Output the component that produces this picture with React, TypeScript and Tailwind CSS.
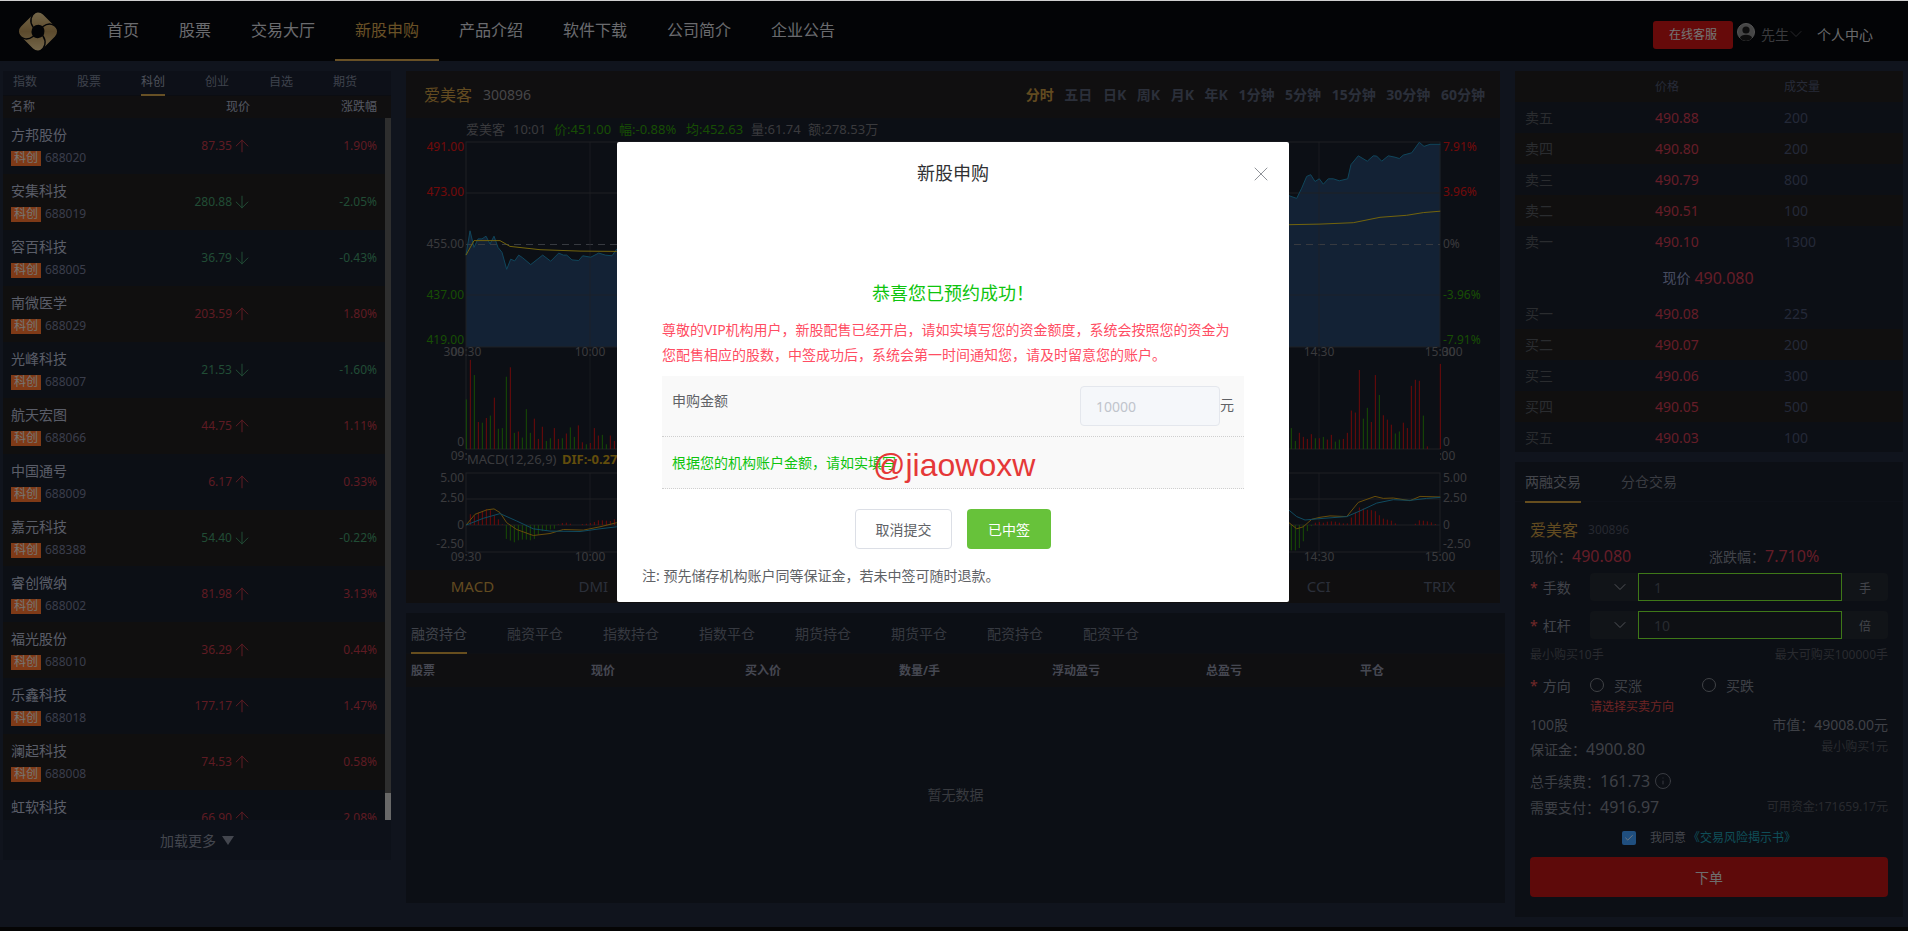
import { ArrowDown, ArrowUp, ChevronDown, Check, Info, X } from "lucide-react";

const stocks = [
  ["方邦股份", "688020", "87.35", "1.90%"],
  ["安集科技", "688019", "280.88", "-2.05%"],
  ["容百科技", "688005", "36.79", "-0.43%"],
  ["南微医学", "688029", "203.59", "1.80%"],
  ["光峰科技", "688007", "21.53", "-1.60%"],
  ["航天宏图", "688066", "44.75", "1.11%"],
  ["中国通号", "688009", "6.17", "0.33%"],
  ["嘉元科技", "688388", "54.40", "-0.22%"],
  ["睿创微纳", "688002", "81.98", "3.13%"],
  ["福光股份", "688010", "36.29", "0.44%"],
  ["乐鑫科技", "688018", "177.17", "1.47%"],
  ["澜起科技", "688008", "74.53", "0.58%"],
  ["虹软科技", "688088", "66.90", "2.08%"],
];

const navItems = ["首页", "股票", "交易大厅", "新股申购", "产品介绍", "软件下载", "公司简介", "企业公告"];
const periods = ["分时", "五日", "日K", "周K", "月K", "年K", "1分钟", "5分钟", "15分钟", "30分钟", "60分钟"];
const indicators = ["MACD", "DMI", "DMA", "BIAS", "KDJ", "BOLL", "RSI", "CCI", "TRIX"];
const holdTabs = ["融资持仓", "融资平仓", "指数持仓", "指数平仓", "期货持仓", "期货平仓", "配资持仓", "配资平仓"];

const sells = [
  ["卖五", "490.88", "200"],
  ["卖四", "490.80", "200"],
  ["卖三", "490.79", "800"],
  ["卖二", "490.51", "100"],
  ["卖一", "490.10", "1300"],
];
const buys = [
  ["买一", "490.08", "225"],
  ["买二", "490.07", "200"],
  ["买三", "490.06", "300"],
  ["买四", "490.05", "500"],
  ["买五", "490.03", "100"],
];

// chart points are read off the picture, in crop pixels of the left and right part
const lx = (p: number) => 400 + p / 3;
const rx = (p: number) => 1280 + p / 3;
const cy = (p: number) => 70 + p / 2.96;

const line = (left: number[][], right: number[][]) =>
  [...left.map(([x, y]) => [lx(x), cy(y)]), ...right.map(([x, y]) => [rx(x), cy(y)])]
    .map(([x, y]) => `${x.toFixed(1)},${y.toFixed(1)}`)
    .join(" ");

const pricePoints = line(
  [[198,548],[210,476],[222,525],[234,500],[246,500],[258,492],[270,515],[282,492],[294,525],[306,540],[320,590],[332,560],[344,565],[356,548],[368,556],[392,576],[428,548],[452,566],[476,542],[490,548],[500,548],[516,562],[536,564],[548,550],[572,554],[596,542],[616,548],[636,550],[650,530]],
  [[27,372],[50,380],[65,350],[80,315],[92,310],[105,330],[118,322],[130,338],[145,322],[160,322],[178,328],[203,322],[213,280],[235,254],[262,270],[280,254],[290,255],[305,270],[325,254],[345,258],[358,262],[370,252],[395,245],[418,214],[432,226],[450,220],[481,220]],
);
const avgPoints = line(
  [[198,548],[222,505],[300,505],[330,522],[420,532],[540,536],[650,537]],
  [[27,458],[120,456],[220,452],[300,436],[380,430],[430,422],[481,418]],
);
const difPoints = line(
  [[198,1347],[225,1315],[260,1302],[282,1299],[300,1310],[320,1340],[350,1360],[400,1378],[450,1372],[490,1360],[550,1362],[600,1352],[650,1340]],
  [[27,1340],[50,1358],[70,1352],[95,1330],[120,1324],[150,1320],[200,1322],[235,1280],[285,1262],[310,1268],[340,1267],[390,1275],[420,1262],[481,1264]],
);
const deaPoints = line(
  [[198,1347],[250,1327],[300,1313],[350,1335],[400,1358],[450,1365],[540,1366],[600,1358],[650,1352]],
  [[27,1303],[50,1322],[75,1332],[120,1328],[200,1322],[240,1305],[290,1282],[340,1272],[390,1274],[440,1268],[481,1265]],
);

type Bar = [number, "r" | "g", number];
const volLeft: Bar[] = [[199,"g",975],[211,"r",858],[223,"g",903],[235,"r",1042],[247,"g",1044],[259,"r",1030],[271,"g",1023],[283,"r",970],[295,"g",1062],[307,"g",1060],[319,"g",908],[331,"r",880],[343,"g",1074],[355,"r",1070],[367,"g",1088],[379,"g",1004],[391,"g",1074],[403,"r",1032],[415,"r",1092],[427,"r",1056],[439,"g",1098],[451,"g",1090],[463,"r",1060],[475,"r",1092],[487,"g",1090],[499,"r",1076],[511,"g",1058],[523,"g",1086],[535,"r",1052],[547,"r",1102],[559,"g",1108],[571,"r",1104],[583,"r",1060],[595,"r",1082],[607,"g",1080],[619,"g",1108],[631,"r",1082],[643,"r",1098]];
const volRight: Bar[] = [[34,"g",1060],[46,"g",1098],[58,"r",1074],[70,"r",1086],[82,"r",1092],[94,"r",1078],[106,"g",1090],[118,"r",1090],[130,"g",1086],[142,"r",1094],[154,"r",1080],[166,"g",1100],[178,"g",1094],[190,"r",1092],[202,"r",1074],[214,"r",1008],[226,"r",1014],[238,"r",888],[250,"g",1032],[262,"g",1000],[274,"r",1042],[286,"r",903],[298,"g",962],[310,"r",1022],[322,"r",1035],[334,"r",1050],[346,"g",1076],[358,"g",1070],[370,"r",1044],[382,"r",1060],[394,"r",935],[406,"r",917],[418,"r",920],[430,"g",1023],[442,"r",1114],[481,"r",870]];
const macdLeft: Bar[] = [[211,"r",1315],[223,"r",1318],[235,"r",1310],[247,"r",1305],[259,"r",1300],[271,"r",1303],[283,"r",1318],[295,"r",1330],[307,"r",1345],[319,"g",1388],[331,"g",1393],[343,"g",1398],[355,"g",1392],[367,"g",1390],[379,"g",1390],[391,"g",1392],[403,"g",1388],[415,"g",1375],[427,"g",1365],[439,"g",1362],[451,"g",1360],[463,"g",1358],[475,"r",1345],[487,"r",1341],[499,"r",1340],[511,"r",1343],[547,"r",1344],[559,"r",1343],[571,"r",1341],[583,"r",1338],[595,"r",1333],[607,"r",1333],[619,"r",1334],[631,"r",1335],[643,"r",1330]];
const macdRight: Bar[] = [[34,"g",1422],[46,"g",1422],[58,"g",1415],[70,"g",1395],[82,"g",1365],[94,"g",1350],[106,"r",1340],[118,"r",1338],[130,"r",1340],[142,"r",1337],[154,"r",1336],[166,"r",1337],[178,"r",1340],[190,"r",1342],[202,"r",1342],[214,"r",1325],[226,"r",1310],[238,"r",1295],[250,"r",1298],[262,"r",1302],[274,"r",1303],[286,"r",1306],[298,"r",1318],[310,"r",1328],[322,"r",1331],[334,"r",1334],[346,"r",1342],[406,"r",1343],[418,"r",1333],[430,"r",1334],[442,"r",1336],[454,"r",1339],[466,"r",1344]];

const RED = "#e01414";
const GREEN = "#2e9a08";
const GRID = "#3c4048";
const AXIS = "#74747a";

const Bars = ({ left, right, base }: { left: Bar[]; right: Bar[]; base: number }) => (
  <g strokeWidth={1}>
    {left.map(([x, c, y]) => (
      <line key={`l${x}`} x1={lx(x)} x2={lx(x)} y1={cy(base)} y2={cy(y)} stroke={c === "r" ? RED : GREEN} />
    ))}
    {right.map(([x, c, y]) => (
      <line key={`r${x}`} x1={rx(x)} x2={rx(x)} y1={cy(base)} y2={cy(y)} stroke={c === "r" ? RED : GREEN} />
    ))}
  </g>
);

const KLineChart = () => (
  <svg viewBox="406 118 1094 452" className="block w-[1094px] h-[452px]" fontSize={12}>
    <text y={134} fontSize={13} fill={AXIS}>
      <tspan x={466}>爱美客</tspan>
      <tspan x={513}>10:01</tspan>
      <tspan x={554} fill={GREEN}>价:451.00</tspan>
      <tspan x={619} fill={GREEN}>幅:-0.88%</tspan>
      <tspan x={686} fill={GREEN}>均:452.63</tspan>
      <tspan x={751}>量:61.74</tspan>
      <tspan x={808}>额:278.53万</tspan>
    </text>

    {/* price area */}
    <polygon points={`466,347 ${pricePoints} 1440,347`} fill="#27456a" />
    <rect x={466} y={142} width={974} height={205} fill="none" stroke={GRID} />
    <line x1={466} x2={1440} y1={193} y2={193} stroke={GRID} />
    <line x1={466} x2={1440} y1={295} y2={295} stroke={GRID} opacity={0.7} />
    <line x1={466} x2={1440} y1={244.5} y2={244.5} stroke="#6e7480" strokeDasharray="7 5" />
    <line x1={590} x2={590} y1={142} y2={347} stroke={GRID} opacity={0.7} />
    <line x1={1319} x2={1319} y1={142} y2={347} stroke={GRID} opacity={0.7} />
    <polyline points={pricePoints} fill="none" stroke="#1f8cb8" strokeWidth={1} />
    <polyline points={avgPoints} fill="none" stroke="#e6c818" strokeWidth={1} />

    <g textAnchor="end">
      <text x={464} y={151} fill={RED}>491.00</text>
      <text x={464} y={196} fill={RED}>473.00</text>
      <text x={464} y={248} fill={AXIS}>455.00</text>
      <text x={464} y={299} fill={GREEN}>437.00</text>
      <text x={464} y={344} fill={GREEN}>419.00</text>
    </g>
    <text x={1443} y={151} fill={RED}>7.91%</text>
    <text x={1443} y={196} fill={RED}>3.96%</text>
    <text x={1443} y={248} fill={AXIS}>0%</text>
    <text x={1443} y={299} fill={GREEN}>-3.96%</text>
    <text x={1443} y={344} fill={GREEN}>-7.91%</text>

    {/* volume */}
    <g fill={AXIS}>
      <text x={464} y={356} textAnchor="end">300</text>
      <text x={466} y={356} textAnchor="middle">09:30</text>
      <text x={590} y={356} textAnchor="middle">10:00</text>
      <text x={1319} y={356} textAnchor="middle">14:30</text>
      <text x={1440} y={356} textAnchor="middle">15:00</text>
      <text x={1442} y={356}>300</text>
      <text x={464} y={446} textAnchor="end">0</text>
      <text x={1443} y={446}>0</text>
      <text x={466} y={460} textAnchor="middle">09:30</text>
      <text x={1440} y={460} textAnchor="middle">15:00</text>
    </g>
    <line x1={590} x2={590} y1={347} y2={449} stroke={GRID} opacity={0.6} />
    <line x1={1319} x2={1319} y1={347} y2={449} stroke={GRID} opacity={0.6} />
    <line x1={466} x2={466} y1={347} y2={449} stroke={GRID} />
    <line x1={466} x2={1440} y1={449} y2={449} stroke={GRID} />
    <Bars left={volLeft} right={volRight} base={1122} />

    {/* macd */}
    <rect x={467} y={450} width={973} height={22} fill="#181e2a" />
    <text x={467} y={464} fontSize={13} fill={AXIS}>MACD(12,26,9)</text>
    <text x={562} y={464} fontSize={13} fontWeight={700} fill="#c49a18">DIF:-0.27</text>
    <rect x={466} y={473} width={974} height={79} fill="none" stroke={GRID} />
    <line x1={466} x2={1440} y1={499} y2={499} stroke={GRID} />
    <line x1={466} x2={1440} y1={525} y2={525} stroke={GRID} />
    <line x1={590} x2={590} y1={473} y2={552} stroke={GRID} opacity={0.7} />
    <line x1={1319} x2={1319} y1={473} y2={552} stroke={GRID} opacity={0.7} />
    <Bars left={macdLeft} right={macdRight} base={1347} />
    <polyline points={difPoints} fill="none" stroke="#d09a14" strokeWidth={1} />
    <polyline points={deaPoints} fill="none" stroke="#1f96c0" strokeWidth={1} />
    <g fill={AXIS}>
      <text x={464} y={482} textAnchor="end">5.00</text>
      <text x={464} y={502} textAnchor="end">2.50</text>
      <text x={464} y={529} textAnchor="end">0</text>
      <text x={464} y={548} textAnchor="end">-2.50</text>
      <text x={1443} y={482}>5.00</text>
      <text x={1443} y={502}>2.50</text>
      <text x={1443} y={529}>0</text>
      <text x={1443} y={548}>-2.50</text>
      <text x={466} y={561} textAnchor="middle">09:30</text>
      <text x={590} y={561} textAnchor="middle">10:00</text>
      <text x={1319} y={561} textAnchor="middle">14:30</text>
      <text x={1440} y={561} textAnchor="middle">15:00</text>
    </g>
  </svg>
);

const Logo = () => (
  <svg viewBox="0 0 44 45" className="w-[44px] h-[45px]">
    <defs>
      <linearGradient id="gold" x1="0" y1="0" x2="1" y2="1">
        <stop offset="0" stopColor="#eed49a" />
        <stop offset="0.5" stopColor="#b8955a" />
        <stop offset="1" stopColor="#f0d79e" />
      </linearGradient>
    </defs>
    <rect x="6.5" y="7" width="31" height="31" rx="7" transform="rotate(45 22 22.5)" fill="url(#gold)" />
    <g fill="none" stroke="#06080c" strokeWidth="1.4" strokeLinecap="round">
      <path d="M17 18 C13 12 15 6 20 3" />
      <path d="M27 17.5 C33 13 39 15 42 21" />
      <path d="M27 27 C31 33 29 39 24 42" />
      <path d="M17 27.5 C11 32 5 30 2 24" />
    </g>
    <path d="M17 18 Q22 14 27 17.5 Q30 22.5 27 27 Q22 31 17 27.5 Q14 22.5 17 18 Z" fill="#06080c" />
  </svg>
);

const SelectInput = ({ value, unit }: { value: string; unit: string }) => (
  <div className="flex-1 h-[28px] flex rounded bg-[#222831]">
    <div className="w-[48px] flex items-center justify-end pr-[8px]">
      <ChevronDown size={20} strokeWidth={1.2} className="text-[#a0a4ac]" />
    </div>
    <input
      readOnly
      value={value}
      className="w-[204px] h-full border border-[#7cf030] bg-[#1c2029] px-[15px] text-[14px] text-[#50555f] outline-none"
    />
    <div className="flex-1 flex items-center justify-center pt-1 text-[12px] text-[#868b96]">{unit}</div>
  </div>
);

const Required = ({ text }: { text: string }) => (
  <div className="w-[60px] shrink-0 text-[14px] text-[#828794] whitespace-nowrap">
    <span className="text-[#e05252] mr-[5px]">*</span>
    {text}
  </div>
);

const BookRow = ({ row, odd }: { row: string[]; odd: boolean }) => (
  <div className={`grid grid-cols-[130px_129px_1fr] pl-[10px] h-[31px] items-center text-[14px] ${odd ? "bg-[#201e1e]" : "bg-[#181e2a]"}`}>
    <span className="text-[#54585f]">{row[0]}</span>
    <span className="text-[#c83a50]">{row[1]}</span>
    <span className="text-[#485270]">{row[2]}</span>
  </div>
);

export default function App() {
  return (
    <div className="h-screen w-full overflow-hidden flex flex-col bg-[#20283a] font-['Noto_Sans','Noto_Sans_CJK_SC',sans-serif]">
      <div className="h-px bg-[#cfcfcf]" />

      <header className="h-[60px] flex items-stretch bg-[#06080c]">
        <div className="w-[87px] pl-[16px] pt-[8px]">
          <Logo />
        </div>
        <nav className="flex">
          {navItems.map((item) => (
            <div
              key={item}
              className={`px-5 flex items-center text-[16px] border-b-2 ${item === "新股申购" ? "text-[#d2a24c] border-[#d2a24c]" : "text-[#d4d6dc] border-transparent"}`}
            >
              {item}
            </div>
          ))}
        </nav>
        <div className="ml-auto flex items-center pt-[6px] pr-[35px]">
          <div className="w-[80px] h-[28px] mt-[2px] mr-[4px] flex items-center justify-center rounded-[3px] bg-[#cc1414] text-[12px] text-[#e8e8e8]">
            在线客服
          </div>
          <svg viewBox="0 0 18 18" className="w-[18px] h-[18px] mb-[4px]">
            <circle cx="9" cy="9" r="8.5" fill="#8c8c8c" stroke="#aaa" strokeWidth="1" />
            <circle cx="9" cy="7" r="3.6" fill="#1a1a1a" />
            <path d="M2.8 15 C4 10.8 14 10.8 15.2 15 A8 8 0 0 1 2.8 15 Z" fill="#1a1a1a" />
          </svg>
          <span className="ml-[6px] text-[14px] text-[#74747a]">先生</span>
          <ChevronDown size={20} strokeWidth={0.8} className="-ml-[3px] text-[#74747a]" />
          <span className="ml-[11px] text-[14px] text-[#d0d2d6]">个人中心</span>
        </div>
      </header>

      <main className="flex-1 min-h-0 flex pt-[10px] pl-[3px]">
        {/* left: stock list */}
        <section className="w-[388px] h-[789px] flex flex-col bg-[#181e2a] shrink-0">
          <div className="h-[25px] flex pl-[10px] gap-[40px] bg-[#1a2030] border-b border-[#161a24]">
            {["指数", "股票", "科创", "创业", "自选", "期货"].map((tab) => (
              <div
                key={tab}
                className={`h-[25px] w-[24px] text-[12px] leading-[22px] border-b-2 ${tab === "科创" ? "text-[#9aa0b4] border-[#cfa04a]" : "text-[#7c8498] border-transparent"}`}
              >
                {tab}
              </div>
            ))}
          </div>
          <div className="h-[22px] flex items-center pl-[8px] pr-[14px] bg-[#201e20] text-[12px] text-[#a8aec4]">
            <span className="w-[137px]">名称</span>
            <span className="w-[102px] text-right">现价</span>
            <span className="flex-1 text-right">涨跌幅</span>
          </div>
          <div className="relative h-[702px] overflow-hidden">
            {stocks.map(([name, code, price, pct], i) => {
              const down = pct.startsWith("-");
              const color = down ? "text-[#42986a]" : "text-[#bc3646]";
              return (
                <div
                  key={code}
                  className={`h-[56px] w-[382px] pl-[8px] pr-[8px] flex items-center ${i % 2 ? "bg-[#201e1e]" : "bg-[#181e2a]"}`}
                >
                  <div className="w-[137px]">
                    <div className="text-[14px] leading-[20px] text-[#b4bbd0]">{name}</div>
                    <div className="mt-[4px] flex items-center">
                      <span className="w-[30px] h-[15px] shrink-0 flex items-center justify-center bg-[#ff742e] text-[12px] text-[#f0e8e0]">科创</span>
                      <span className="ml-[4px] text-[12px] text-[#747a96]">{code}</span>
                    </div>
                  </div>
                  <div className={`w-[100px] flex items-center justify-end text-[12px] ${color}`}>
                    {price}
                    <span className="-mr-[4px]">
                      {down ? <ArrowDown size={20} strokeWidth={1.2} /> : <ArrowUp size={20} strokeWidth={1.2} />}
                    </span>
                  </div>
                  <div className={`flex-1 text-right text-[12px] ${color}`}>{pct}</div>
                </div>
              );
            })}
            <div className="absolute right-0 top-0 h-full w-[6px] bg-[#5c5c5c]">
              <div className="absolute bottom-0 w-full h-[27px] bg-[#d0d0d0]" />
            </div>
          </div>
          <div className="h-[40px] flex items-center justify-center bg-[#1a2232] text-[14px] text-[#868c9c]">
            加载更多
            <span className="ml-[6px] w-0 h-0 border-x-[6px] border-t-[9px] border-x-transparent border-t-[#868c9c]" />
          </div>
        </section>

        {/* center: chart and positions */}
        <section className="w-[1099px] ml-[15px] shrink-0 flex flex-col">
          <div className="w-[1094px] h-[532px] flex flex-col bg-[#181e2a]">
            <div className="h-[47px] flex items-center pl-[18px] pr-[15px] bg-[#201e20]">
              <span className="text-[16px] text-[#c49640]">爱美客</span>
              <span className="ml-[11px] text-[14px] text-[#8c8c90]">300896</span>
              <div className="ml-auto flex gap-[10.6px] text-[14px] font-bold text-[#565e74]">
                {periods.map((p) => (
                  <span key={p} className={p === "分时" ? "text-[#c49640]" : ""}>
                    {p}
                  </span>
                ))}
              </div>
            </div>
            <KLineChart />
            <div className="flex-1 grid grid-cols-9 pl-[6px] items-center bg-[#201e20] text-[15px] text-[#565e74]">
              {indicators.map((name) => (
                <span key={name} className={`text-center ${name === "MACD" ? "text-[#c49640]" : ""}`}>
                  {name}
                </span>
              ))}
            </div>
          </div>

          <div className="mt-[10px] h-[290px] flex flex-col bg-[#181e2a]">
            <div className="h-[41px] flex pl-[5px] gap-[40px] border-b border-[#1c2028]">
              {holdTabs.map((tab) => (
                <div
                  key={tab}
                  className={`w-[56px] h-[41px] whitespace-nowrap text-[14px] leading-[41px] border-b-2 ${tab === "融资持仓" ? "text-[#808694] border-[#cf9c3c]" : "text-[#6c7280] border-transparent"}`}
                >
                  {tab}
                </div>
              ))}
            </div>
            <div className="h-[33px] grid grid-cols-[180px_154px_154px_153px_154px_154px_1fr] pl-[5px] items-center bg-[#1e1e22] text-[12px] font-bold text-[#8c90a4]">
              <span>股票</span>
              <span>现价</span>
              <span>买入价</span>
              <span>数量/手</span>
              <span>浮动盈亏</span>
              <span>总盈亏</span>
              <span>平仓</span>
            </div>
            <div className="flex-1 flex items-center justify-center pb-[2px] text-[14px] text-[#70747e]">暂无数据</div>
          </div>
        </section>

        {/* right: order book and order form */}
        <section className="w-[388px] ml-[10px] shrink-0 flex flex-col">
          <div className="h-[381px] overflow-hidden bg-[#181e2a]">
            <div className="grid grid-cols-[130px_129px_1fr] pl-[10px] h-[31px] items-center bg-[#201e1e] text-[12px] text-[#4e5670]">
              <span />
              <span>价格</span>
              <span>成交量</span>
            </div>
            {sells.map((row, i) => (
              <BookRow key={row[0]} row={row} odd={i % 2 === 1} />
            ))}
            <div className="h-[41px] flex items-center justify-center pr-[2px] text-[14px] text-[#8e98c0]">
              现价
              <span className="ml-[4px] text-[16px] text-[#c83a50]">490.080</span>
            </div>
            {buys.map((row, i) => (
              <BookRow key={row[0]} row={row} odd={i % 2 === 1} />
            ))}
          </div>

          <div className="mt-[10px] h-[455px] bg-[#181e2a]">
            <div className="h-[40px] flex pl-[10px] gap-[40px] border-b border-[#1c2230] text-[14px]">
              <div className="h-[41px] leading-[40px] border-b-2 border-[#cf9c3c] text-[#888c98]">两融交易</div>
              <div className="h-[41px] leading-[40px] text-[#747884]">分仓交易</div>
            </div>
            <div className="px-[15px]">
              <div className="mt-[16px] h-[24px] flex items-center">
                <span className="text-[16px] text-[#c49640]">爱美客</span>
                <span className="ml-[10px] text-[12px] text-[#4c5060]">300896</span>
              </div>
              <div className="h-[28px] flex items-center text-[#828794]">
                <div className="w-[179px] text-[14px]">
                  现价：<span className="text-[16px] text-[#c83a50]">490.080</span>
                </div>
                <div className="text-[14px]">
                  涨跌幅：<span className="text-[16px] text-[#c83a50]">7.710%</span>
                </div>
              </div>
              <div className="mt-[3px] h-[28px] flex items-center">
                <Required text="手数" />
                <SelectInput value="1" unit="手" />
              </div>
              <div className="mt-[10px] h-[28px] flex items-center">
                <Required text="杠杆" />
                <SelectInput value="10" unit="倍" />
              </div>
              <div className="mt-[7px] h-[18px] flex items-center justify-between text-[12px] text-[#52555e]">
                <span>最小购买10手</span>
                <span>最大可购买100000手</span>
              </div>
              <div className="mt-[9px] h-[24px] flex items-center">
                <Required text="方向" />
                <span className="w-[14px] h-[14px] rounded-full border border-[#80848c]" />
                <span className="ml-[10px] w-[88px] text-[14px] text-[#7c808c]">买涨</span>
                <span className="w-[14px] h-[14px] rounded-full border border-[#80848c]" />
                <span className="ml-[10px] text-[14px] text-[#7c808c]">买跌</span>
              </div>
              <div className="ml-[60px] mt-[3px] h-[14px] leading-[14px] text-[12px] text-[#d84848]">请选择买卖方向</div>
              <div className="h-[20px] flex items-center justify-between text-[14px] text-[#7c808c]">
                <span>100股</span>
                <span>市值：49008.00元</span>
              </div>
              <div className="mt-[2px] h-[26px] flex items-center justify-between">
                <span className="text-[14px] text-[#7c808c]">
                  保证金：<span className="text-[16px]">4900.80</span>
                </span>
                <span className="mb-[4px] text-[12px] text-[#52555e]">最小购买1元</span>
              </div>
              <div className="mt-[6px] h-[26px] flex items-center text-[14px] text-[#7c808c]">
                总手续费：<span className="text-[16px]">161.73</span>
                <Info size={18} strokeWidth={1.2} className="ml-[4px]" />
              </div>
              <div className="h-[26px] flex items-center justify-between">
                <span className="text-[14px] text-[#7c808c]">
                  需要支付：<span className="text-[16px]">4916.97</span>
                </span>
                <span className="text-[12px] text-[#52555e]">可用资金:171659.17元</span>
              </div>
              <div className="mt-[11px] h-[14px] flex items-center justify-center text-[12px]">
                <span className="w-[14px] h-[14px] rounded-[2px] flex items-center justify-center bg-[#409eff]">
                  <Check size={10} strokeWidth={2} className="text-white" />
                </span>
                <span className="ml-[14px] text-[#8a8e9a]">我同意</span>
                <span className="ml-[2px] text-[#1f9cb0]">《交易风险揭示书》</span>
              </div>
              <div className="mt-[12px] h-[40px] flex items-center justify-center rounded bg-[#bc1414] text-[14px] text-[#dcdcdc]">
                下单
              </div>
            </div>
          </div>
        </section>
      </main>

      <div className="h-[4px] bg-[#0a0a0a]" />

      {/* dialog */}
      <div className="fixed inset-x-0 top-px bottom-0 bg-black/50" />
      <div className="fixed left-[617px] top-[142px] w-[672px] h-[460px] rounded-[2px] bg-white">
        <div className="relative h-[62px] flex items-center justify-center text-[18px] text-[#303133]">
          新股申购
          <X size={24} strokeWidth={1} className="absolute right-[16px] top-[20px] text-[#909399]" />
        </div>
        <div className="px-[45px]">
          <div className="mt-[77px] h-[24px] leading-[24px] text-center text-[18px] text-[#0ec40e]">恭喜您已预约成功！</div>
          <p className="mt-[12px] pr-[10px] text-[14px] leading-[25px] text-[#ff4d63]">
            尊敬的VIP机构用户，新股配售已经开启，请如实填写您的资金额度，系统会按照您的资金为您配售相应的股数，中签成功后，系统会第一时间通知您，请及时留意您的账户。
          </p>
          <div className="mt-[9px] relative bg-[#f9f9f9]">
            <div className="h-[61px] flex pl-[10px] pt-[10px] border-b border-dotted border-[#cfcfcf]">
              <span className="flex-1 pt-[4px] text-[14px] leading-[22px] text-[#606266]">申购金额</span>
              <input
                readOnly
                value="10000"
                className="w-[140px] h-[40px] rounded border border-[#e4e7ed] bg-[#f5f7fa] px-[15px] text-[14px] text-[#c0c4cc] outline-none"
              />
              <span className="w-[24px] pt-[9px] text-[14px] leading-[20px] text-[#606266]">元</span>
            </div>
            <div className="h-[52px] flex items-center pl-[10px] border-b border-dotted border-[#cfcfcf] text-[14px] text-[#0ec40e]">
              根据您的机构账户金额，请如实填写
            </div>
            <span className="absolute left-[211px] top-[71px] text-[32px] leading-[36px] text-[#e53838] font-['Liberation_Sans',sans-serif]">
              @jiaowoxw
            </span>
          </div>
          <div className="mt-[20px] flex justify-center gap-[15px]">
            <div className="w-[97px] h-[40px] flex items-center justify-center rounded border border-[#dcdfe6] text-[14px] text-[#606266]">取消提交</div>
            <div className="w-[84px] h-[40px] flex items-center justify-center rounded bg-[#67c23a] text-[14px] text-white">已中签</div>
          </div>
        </div>
        <div className="mt-[17px] pl-[25px] text-[14px] leading-[20px] text-[#606266]">
          注: 预先储存机构账户同等保证金，若未中签可随时退款。
        </div>
      </div>
    </div>
  );
}
